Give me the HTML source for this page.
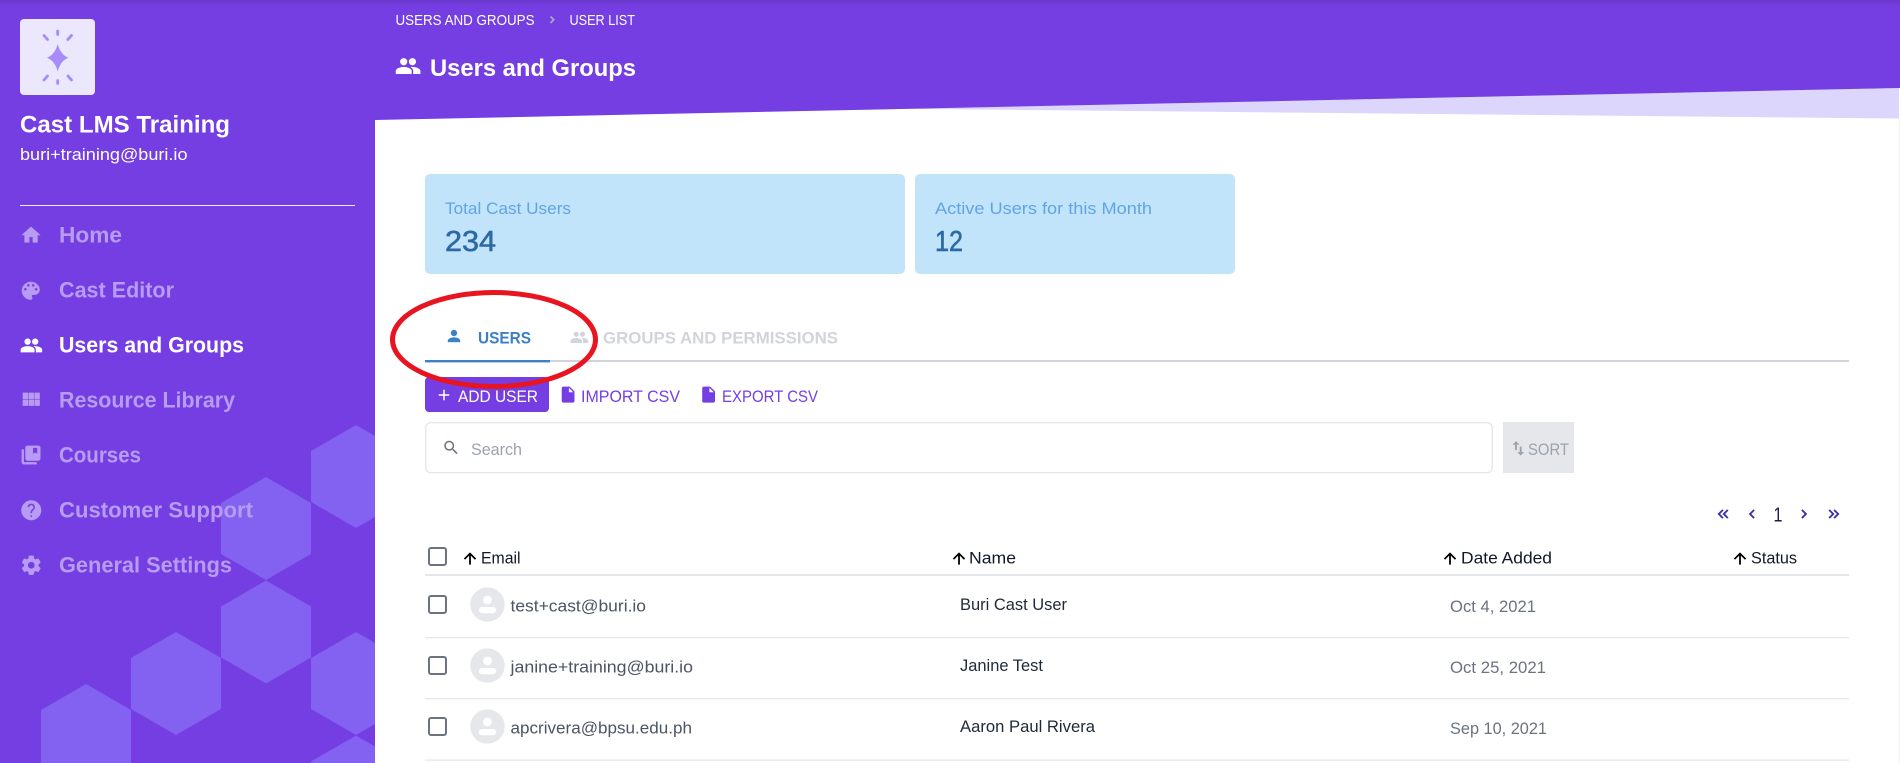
<!DOCTYPE html>
<html lang="en">
<head>
<meta charset="utf-8">
<title>Users and Groups</title>
<style>
html,body{margin:0;padding:0;width:1900px;height:763px;overflow:hidden;background:#fff}
svg{display:block;overflow:hidden}
text{font-family:"Liberation Sans",sans-serif}
.b{font-weight:700}
</style>
</head>
<body>
<svg xmlns="http://www.w3.org/2000/svg" width="1900" height="763" viewBox="0 0 1900 763">
<defs>
<linearGradient id="topshade" x1="0" y1="0" x2="0" y2="1"><stop offset="0" stop-color="#000" stop-opacity=".1"/><stop offset="1" stop-color="#000" stop-opacity="0"/></linearGradient>
<path id="i-people" d="M16 11c1.66 0 2.99-1.34 2.99-3S17.66 5 16 5c-1.66 0-3 1.34-3 3s1.34 3 3 3zm-8 0c1.66 0 2.99-1.34 2.99-3S9.66 5 8 5C6.34 5 5 6.34 5 8s1.34 3 3 3zm0 2c-2.33 0-7 1.17-7 3.5V19h14v-2.5c0-2.33-4.67-3.5-7-3.5zm8 0c-.29 0-.62.02-.97.05 1.16.84 1.97 1.97 1.97 3.45V19h6v-2.5c0-2.33-4.67-3.5-7-3.5z"/>
<path id="i-person" d="M12 12c2.21 0 4-1.79 4-4s-1.79-4-4-4-4 1.79-4 4 1.79 4 4 4zm0 2c-2.67 0-8 1.34-8 4v2h16v-2c0-2.66-5.33-4-8-4z"/>
<path id="i-file" d="M6 2c-1.1 0-1.99.9-1.99 2L4 20c0 1.1.89 2 1.99 2H18c1.1 0 2-.9 2-2V8l-6-6H6zm7 7V3.5L18.5 9H13z"/>
<path id="i-up" d="M4 12l1.41 1.41L11 7.83V20h2V7.83l5.58 5.59L20 12l-8-8-8 8z"/>
<g id="avatar"><circle cx="0" cy="0" r="17.2" fill="#e5e7eb"/><circle cx="0" cy="-4.5" r="4.4" fill="#fff"/><rect x="-8.6" y="2.5" width="17.2" height="6.2" rx="3.1" fill="#fff"/></g>
</defs>

<!-- main background -->
<rect x="0" y="0" width="1900" height="763" fill="#fff"/>
<polygon points="889,108.6 1899,88 1899,118.5" fill="#dcd6fc"/>
<polygon points="375,0 1900,0 1900,88 375,120" fill="#743ee2"/>
<rect x="1899" y="118" width="1" height="645" fill="#f3f3f5"/>

<!-- sidebar -->
<rect x="0" y="0" width="375" height="763" fill="#743ee2"/>
<g fill="#8361f1">
<polygon points="356,425 375,436 375,517 356,528 311,502 311,451"/>
<polygon points="266,477 311,503 311,554 266,580 221,554 221,503"/>
<polygon points="266,580.5 311,606.5 311,657.5 266,683.5 221,657.5 221,606.5"/>
<polygon points="176,632 221,658 221,709 176,735 131,709 131,658"/>
<polygon points="356,632 375,643 375,724 356,735 311,709 311,658"/>
<polygon points="86,684 131,710 131,763 41,763 41,710"/>
<polygon points="356,735.5 375,746.5 375,763 311,763 311,761.5"/>
</g>
<rect x="0" y="0" width="1900" height="6" fill="url(#topshade)"/>

<!-- logo -->
<rect x="20" y="19" width="75" height="76" rx="4" fill="#ebe7fc"/>
<path d="M57.7 44Q60.6 54.8 68.3 57.7 60.6 60.6 57.7 71.3 54.8 60.6 47 57.7 54.8 54.8 57.7 44z" fill="#a78bfa"/>
<g stroke="#a78bfa" stroke-width="2.8" stroke-linecap="round" fill="none">
<path d="M57.7 31V34.5M57.7 80.5V83.5M44 35.5L47.5 39.5M71.5 35.5L67.8 39.5M44 80L47.5 76M71.5 80L68 76"/>
</g>

<text x="20" y="132.5" font-size="24" class="b" fill="#fff" textLength="210" lengthAdjust="spacingAndGlyphs">Cast LMS Training</text>
<text x="20" y="160" font-size="17" fill="#fff" textLength="167.5" lengthAdjust="spacingAndGlyphs">buri+training@buri.io</text>
<rect x="20" y="205" width="335" height="1" fill="#efeafc"/>

<!-- nav -->
<g fill="#b89bf2">
<g stroke="#b89bf2" stroke-width=".5">
<path transform="translate(20 224) scale(.92)" d="M10 20v-6h4v6h5v-8h3L12 3 2 12h3v8z"/>
<path transform="translate(19 279) scale(.98)" d="M12 3c-4.97 0-9 4.03-9 9s4.03 9 9 9c.83 0 1.5-.67 1.5-1.5 0-.39-.15-.74-.39-1.01-.23-.26-.38-.61-.38-.99 0-.83.67-1.5 1.5-1.5H16c2.76 0 5-2.24 5-5 0-4.42-4.03-8-9-8zm-5.5 9c-.83 0-1.5-.67-1.5-1.5S5.67 9 6.5 9 8 9.67 8 10.5 7.33 12 6.5 12zm3-4C8.67 8 8 7.33 8 6.5S8.67 5 9.5 5s1.5.67 1.5 1.5S10.33 8 9.5 8zm5 0c-.83 0-1.5-.67-1.5-1.5S13.67 5 14.5 5s1.5.67 1.5 1.5S15.33 8 14.5 8zm3 4c-.83 0-1.5-.67-1.5-1.5S16.67 9 17.5 9s1.5.67 1.5 1.5-.67 1.5-1.5 1.5z"/>
<path transform="translate(19 388) scale(.98)" d="M4 11h5V5H4v6zm0 7h5v-6H4v6zm6 0h5v-6h-5v6zm6 0h5v-6h-5v6zm-6-7h5V5h-5v6zm6-6v6h5V5h-5z"/>
<path transform="translate(20 444) scale(.92)" d="M4 6H2v14c0 1.1.9 2 2 2h14v-2H4V6zm16-4H8c-1.1 0-2 .9-2 2v12c0 1.1.9 2 2 2h12c1.1 0 2-.9 2-2V4c0-1.1-.9-2-2-2zm-1 9l-2.5-1.5L14 11V4h5v7z"/>
<path transform="translate(19.5 498.5) scale(.98)" d="M12 2C6.48 2 2 6.48 2 12s4.48 10 10 10 10-4.48 10-10S17.52 2 12 2zm1 17h-2v-2h2v2zm2.07-7.75l-.9.92C13.45 12.9 13 13.5 13 15h-2v-.5c0-1.1.45-2.1 1.17-2.83l1.24-1.26c.37-.36.59-.86.59-1.41 0-1.1-.9-2-2-2s-2 .9-2 2H8c0-2.21 1.79-4 4-4s4 1.79 4 4c0 .88-.36 1.68-.93 2.25z"/>
<path transform="translate(19.5 553.5) scale(.98)" d="M19.14 12.94c.04-.3.06-.61.06-.94 0-.32-.02-.64-.07-.94l2.03-1.58c.18-.14.23-.41.12-.61l-1.92-3.32c-.12-.22-.37-.29-.59-.22l-2.39.96c-.5-.38-1.03-.7-1.62-.94l-.36-2.54c-.04-.24-.24-.41-.48-.41h-3.84c-.24 0-.43.17-.47.41l-.36 2.54c-.59.24-1.13.57-1.62.94l-2.39-.96c-.22-.08-.47 0-.59.22L2.74 8.87c-.12.21-.08.47.12.61l2.03 1.58c-.05.3-.09.63-.09.94s.02.64.07.94l-2.03 1.58c-.18.14-.23.41-.12.61l1.92 3.32c.12.22.37.29.59.22l2.39-.96c.5.38 1.03.7 1.62.94l.36 2.54c.05.24.24.41.48.41h3.84c.24 0 .44-.17.47-.41l.36-2.54c.59-.24 1.13-.56 1.62-.94l2.39.96c.22.08.47 0 .59-.22l1.92-3.32c.12-.22.07-.47-.12-.61l-2.01-1.58zM12 15.6c-1.98 0-3.6-1.62-3.6-3.6s1.62-3.6 3.6-3.6 3.6 1.62 3.6 3.6-1.62 3.6-3.6 3.6z"/>
</g>
<text x="59" y="242.7" font-size="22" class="b" textLength="63" lengthAdjust="spacingAndGlyphs">Home</text>
<text x="59" y="297.5" font-size="22" class="b" textLength="115" lengthAdjust="spacingAndGlyphs">Cast Editor</text>
<text x="59" y="407.5" font-size="22" class="b" textLength="176" lengthAdjust="spacingAndGlyphs">Resource Library</text>
<text x="59" y="462.5" font-size="22" class="b" textLength="82" lengthAdjust="spacingAndGlyphs">Courses</text>
<text x="59" y="517.5" font-size="22" class="b" textLength="194" lengthAdjust="spacingAndGlyphs">Customer Support</text>
<text x="59" y="572.5" font-size="22" class="b" textLength="173" lengthAdjust="spacingAndGlyphs">General Settings</text>
</g>
<use href="#i-people" transform="translate(20 334) scale(.95)" fill="#fff" stroke="#fff" stroke-width=".6"/>
<text x="59" y="352.5" font-size="22" class="b" fill="#fff" textLength="185" lengthAdjust="spacingAndGlyphs">Users and Groups</text>

<!-- header -->
<text x="395.5" y="25" font-size="14.5" fill="#fff" textLength="139" lengthAdjust="spacingAndGlyphs">USERS AND GROUPS</text>
<path d="M550.5 16.5L553.7 19.7 550.5 23" fill="none" stroke="#a9a5c0" stroke-width="1.8"/>
<text x="569.5" y="25" font-size="14.5" fill="#fff" textLength="65.5" lengthAdjust="spacingAndGlyphs">USER LIST</text>
<use href="#i-people" transform="translate(395 53) scale(1.09)" fill="#fff" stroke="#fff" stroke-width=".6"/>
<text x="430" y="76" font-size="24" class="b" fill="#fff" textLength="206" lengthAdjust="spacingAndGlyphs">Users and Groups</text>

<!-- stat cards -->
<rect x="425" y="174" width="480" height="100" rx="5" fill="#c1e4fa"/>
<rect x="915" y="174" width="320" height="100" rx="5" fill="#c1e4fa"/>
<text x="445" y="214" font-size="17" fill="#60a5e6" textLength="126" lengthAdjust="spacingAndGlyphs">Total Cast Users</text>
<text x="935" y="214" font-size="17" fill="#60a5e6" textLength="217" lengthAdjust="spacingAndGlyphs">Active Users for this Month</text>
<text x="445" y="251" font-size="29" fill="#2d6aa5" stroke="#2d6aa5" stroke-width=".6" textLength="51" lengthAdjust="spacingAndGlyphs">234</text>
<text x="935" y="251" font-size="29" fill="#2d6aa5" stroke="#2d6aa5" stroke-width=".6" textLength="28" lengthAdjust="spacingAndGlyphs">12</text>

<!-- tabs -->
<rect x="425" y="360" width="1424" height="2" fill="#d1d5db"/>
<rect x="425" y="360" width="125" height="2.4" fill="#3b82c4"/>
<use href="#i-person" transform="translate(445 327) scale(.75)" fill="#3b82c4" stroke="#3b82c4" stroke-width=".5"/>
<text x="478" y="343.5" font-size="17" class="b" fill="#3b7fc4" textLength="53" lengthAdjust="spacingAndGlyphs">USERS</text>
<use href="#i-people" transform="translate(570 328) scale(.78)" fill="#d1d5db" stroke="#d1d5db" stroke-width=".6"/>
<text x="603" y="343.5" font-size="17" class="b" fill="#d1d5db" textLength="235" lengthAdjust="spacingAndGlyphs">GROUPS AND PERMISSIONS</text>

<!-- actions -->
<rect x="425" y="377" width="124" height="35" rx="4" fill="#743ee2"/>
<path transform="translate(435 386) scale(.75)" d="M19 13h-6v6h-2v-6H5v-2h6V5h2v6h6v2z" fill="#fff"/>
<text x="458" y="402" font-size="17" fill="#fff" textLength="80" lengthAdjust="spacingAndGlyphs">ADD USER</text>
<use href="#i-file" transform="translate(558.5 385) scale(.8)" fill="#743ee2"/>
<text x="581" y="402" font-size="17" fill="#743ee2" textLength="99" lengthAdjust="spacingAndGlyphs">IMPORT CSV</text>
<use href="#i-file" transform="translate(699 385) scale(.8)" fill="#743ee2"/>
<text x="722" y="402" font-size="17" fill="#743ee2" textLength="96" lengthAdjust="spacingAndGlyphs">EXPORT CSV</text>

<!-- search -->
<rect x="425.7" y="422.7" width="1066.6" height="50" rx="5" fill="#fff" stroke="#e5e7eb" stroke-width="1.4"/>
<path transform="translate(442 438.5) scale(.76)" d="M15.5 14h-.79l-.28-.27C15.41 12.59 16 11.11 16 9.5 16 5.91 13.09 3 9.5 3S3 5.91 3 9.5 5.91 16 9.5 16c1.61 0 3.09-.59 4.23-1.57l.27.28v.79l5 4.99L20.49 19l-4.99-5zm-6 0C7.01 14 5 11.99 5 9.5S7.01 5 9.5 5 14 7.01 14 9.5 11.99 14 9.5 14z" fill="#6b7280"/>
<text x="471" y="455" font-size="17" fill="#9ca3af" textLength="51" lengthAdjust="spacingAndGlyphs">Search</text>
<rect x="1503" y="422" width="71" height="51" fill="#e5e7eb"/>
<path transform="translate(1509 439) scale(.78)" d="M9 3L5 6.99h3V14h2V6.99h3L9 3zm7 14.01V10h-2v7.01h-3L15 21l4-3.99h-3z" fill="#9ca3af" stroke="#9ca3af" stroke-width=".5"/>
<text x="1528" y="455" font-size="17" fill="#9ca3af" textLength="41" lengthAdjust="spacingAndGlyphs">SORT</text>

<!-- pagination -->
<g fill="#3730a3" stroke="#3730a3" stroke-width=".6">
<path transform="translate(1714 505) scale(.75)" d="M17.59 18L19 16.59 14.42 12 19 7.41 17.59 6l-6 6zM11 18l1.41-1.41L7.83 12l4.58-4.59L11 6l-6 6z"/>
<path transform="translate(1743 505) scale(.75)" d="M15.41 7.41L14 6l-6 6 6 6 1.41-1.41L10.83 12z"/>
<path transform="translate(1795 505) scale(.75)" d="M10 6L8.59 7.41 13.17 12l-4.58 4.59L10 18l6-6z"/>
<path transform="translate(1825 505) scale(.75)" d="M6.41 6L5 7.41 9.58 12 5 16.59 6.41 18l6-6zM13 6l-1.41 1.41L16.17 12l-4.58 4.59L13 18l6-6z"/>
</g>
<text x="1773.5" y="521.5" font-size="20" fill="#1e1b4b" textLength="9" lengthAdjust="spacingAndGlyphs">1</text>

<!-- table header -->
<rect x="429" y="548" width="17" height="17" rx="2" fill="none" stroke="#6b7280" stroke-width="2"/>
<g fill="#000" stroke="#000" stroke-width=".4">
<use href="#i-up" transform="translate(461 549.5) scale(.75)"/>
<use href="#i-up" transform="translate(950 549.5) scale(.75)"/>
<use href="#i-up" transform="translate(1441 549.5) scale(.75)"/>
<use href="#i-up" transform="translate(1731 549.5) scale(.75)"/>
</g>
<g font-size="17" fill="#111827">
<text x="481" y="563.5" textLength="39.5" lengthAdjust="spacingAndGlyphs">Email</text>
<text x="969" y="563.5" textLength="47" lengthAdjust="spacingAndGlyphs">Name</text>
<text x="1461" y="563.5" textLength="91" lengthAdjust="spacingAndGlyphs">Date Added</text>
<text x="1751" y="563.5" textLength="46" lengthAdjust="spacingAndGlyphs">Status</text>
</g>
<rect x="425" y="574" width="1424" height="2" fill="#e5e7eb"/>

<!-- rows -->
<g fill="#e5e7eb">
<rect x="425" y="637" width="1424" height="1.3"/>
<rect x="425" y="698" width="1424" height="1.3"/>
<rect x="425" y="759.5" width="1424" height="1.3"/>
</g>
<g fill="none" stroke="#6b7280" stroke-width="2">
<rect x="429" y="596" width="17" height="17" rx="2"/>
<rect x="429" y="657" width="17" height="17" rx="2"/>
<rect x="429" y="718" width="17" height="17" rx="2"/>
</g>
<use href="#avatar" x="487.5" y="604.5"/>
<use href="#avatar" x="487.5" y="665.5"/>
<use href="#avatar" x="487.5" y="726.5"/>
<g font-size="17" fill="#4b5563">
<text x="510.5" y="611.5" textLength="135.5" lengthAdjust="spacingAndGlyphs">test+cast@buri.io</text>
<text x="510.5" y="672.5" textLength="182.5" lengthAdjust="spacingAndGlyphs">janine+training@buri.io</text>
<text x="510.5" y="733.5" textLength="181.5" lengthAdjust="spacingAndGlyphs">apcrivera@bpsu.edu.ph</text>
</g>
<g font-size="17" fill="#1f2937">
<text x="960" y="610" textLength="107" lengthAdjust="spacingAndGlyphs">Buri Cast User</text>
<text x="960" y="671" textLength="83" lengthAdjust="spacingAndGlyphs">Janine Test</text>
<text x="960" y="732" textLength="135" lengthAdjust="spacingAndGlyphs">Aaron Paul Rivera</text>
</g>
<g font-size="17" fill="#6b7280">
<text x="1450" y="612" textLength="86" lengthAdjust="spacingAndGlyphs">Oct 4, 2021</text>
<text x="1450" y="673" textLength="96" lengthAdjust="spacingAndGlyphs">Oct 25, 2021</text>
<text x="1450" y="734" textLength="97" lengthAdjust="spacingAndGlyphs">Sep 10, 2021</text>
</g>

<!-- red annotation -->
<ellipse cx="494" cy="339.5" rx="101.5" ry="47" fill="none" stroke="#e8141f" stroke-width="5"/>
</svg>
</body>
</html>
